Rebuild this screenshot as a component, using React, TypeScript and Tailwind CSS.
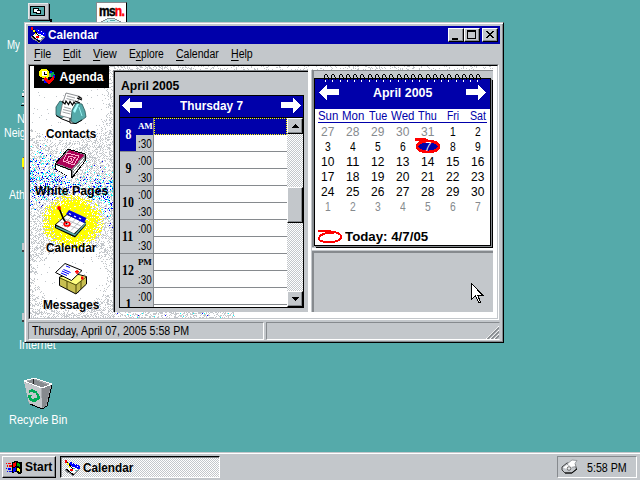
import React, { useLayoutEffect, useRef, useState } from "react";

const SANS = "font-['Liberation_Sans',Arial,sans-serif]";

/* Text squeezed or stretched to a fixed advance width, like a bitmap UI font. */
function T({ w, className = "", children }: { w: number; className?: string; children: React.ReactNode }) {
  const ref = useRef<HTMLSpanElement>(null);
  const [s, setS] = useState(1);
  useLayoutEffect(() => {
    const n = ref.current?.offsetWidth;
    if (n) setS(w / n);
  }, [w]);
  return (
    <span className={`block h-[14px] shrink-0 whitespace-nowrap text-[12px] leading-[14px] ${className}`} style={{ width: w }}>
      <span ref={ref} className="inline-block origin-left" style={{ transform: `scaleX(${s})` }}>
        {children}
      </span>
    </span>
  );
}

function rng(seed: number) {
  let a = seed;
  return () => {
    a = (a * 1664525 + 1013904223) >>> 0;
    return ((a >>> 8) & 0xffff) / 65536;
  };
}

/* Speckled wallpaper of the Agenda shell. */
function Speckle() {
  const r = rng(77);
  const p: Record<string, string> = { g: "", b: "", n: "", c: "", y: "" };
  const put = (k: string, x: number, y: number) => {
    p[k] += `M${x} ${y}h1v1h-1z`;
  };
  for (let y = 0; y < 252; y++) {
    for (let x = 0; x < 463; x++) {
      if (x > 84 && y > 4 && y < 246) continue;
      const v = r();
      const u = r();
      if (x > 84) {
        if (y < 5) {
          if (v < (x < 160 ? 0.35 : 0.16)) put("g", x, y);
        } else if (x < 205) {
          if (v < 0.34) put("g", x, y);
          else if (v < 0.37) put(u < 0.6 ? "c" : "b", x, y);
        }
        continue;
      }
      const yl = Math.hypot((x - 42) / 29, (y - 155) / 25);
      if (yl < 1.1 && v < (yl < 0.7 ? 0.93 : 0.93 - (yl - 0.7) * 1.9)) {
        put("y", x, y);
        continue;
      }
      const side = Math.abs(x - 41) / 41;
      const band = Math.exp(-Math.pow((y - (x < 42 ? 113 : 128)) / 20, 2)) * (x < 42 ? 0.3 : 0.24) * (0.5 + side / 2);
      if (v < band) {
        put(u < 0.42 ? "b" : u < 0.5 ? "n" : "c", x, y);
        continue;
      }
      const d1 = Math.hypot((x - 36) / 42, (y - 38) / 36);
      const d2 = Math.hypot((x - 42) / 38, (y - 211) / 32);
      let d = 0.42;
      if (d1 < 1) d = 0.02;
      else if (d1 < 1.2) d = 0.25;
      if (d2 < 0.9) d = 0.01;
      else if (d2 < 1.1) d = 0.2;
      if (y < 26 && x < 60) d = 0;
      if (r() < d && (x + y) % 2 === 0) put("g", x, y);
      else if (r() < d * 0.45) put("g", x, y);
    }
  }
  return (
    <svg className="absolute left-0 top-0" width="463" height="252" shapeRendering="crispEdges">
      <path d={p.g} fill="#c3c7cb" />
      <path d={p.b} fill="#0000ff" />
      <path d={p.n} fill="#0000aa" />
      <path d={p.c} fill="#00ffff" />
      <path d={p.y} fill="#ffff00" />
    </svg>
  );
}

function Arrow({ right = false }: { right?: boolean }) {
  return (
    <svg width="20" height="15" shapeRendering="crispEdges" className={right ? "-scale-x-100" : ""}>
      <path d="M0 7h1v1h-1zM1 6h1v3h-1zM2 5h1v5h-1zM3 4h1v7h-1zM4 3h1v9h-1zM5 2h1v11h-1zM6 1h1v13h-1zM7 0h1v15h-1zM8 4h12v6h-12z" fill="#fff" />
    </svg>
  );
}

function NotepadIcon() {
  return (
    <svg width="16" height="16" shapeRendering="crispEdges">
      <path d="M2 9L8 3l8 4-5 7z" fill="#fff" />
      <path d="M1 9l8 5 6-6v2l-6 6-8-5z" fill="#868a8e" />
      <path d="M5 3l2-1 9 4v3h-2L5 5z" fill="#0000ff" />
      <path d="M8 3h1v1h-1zM11 4h1v1h-1zM13 6h1v1h-1z" fill="#fff" />
      <path d="M1 0l8 9M2 9l8 6" stroke="#000" fill="none" />
      <path d="M1 0h2v3h-2zM6 9h3v2h-3z" fill="#ff0000" />
      <path d="M3 3h2v2h-2zM5 6h1v2h-1z" fill="#ffff00" />
      <path d="M9 8h2v1h-2zM11 10h2v1h-2zM7 11h1v1h-1z" fill="#55aaaa" />
    </svg>
  );
}

function AgendaIcon() {
  return (
    <svg width="17" height="16" shapeRendering="crispEdges">
      <path d="M2 0h6v1h1v1h1v6h-1v1h-6v-1h-2v-1h-1v-5h1v-1h1z" fill="#ffff00" />
      <path d="M3 2h5v5h-5z" fill="#fff" />
      <path d="M5 3h1v2h2v1h-3z" fill="#000" />
      <path d="M11 3h4l1 3v3h-3l-3-3z" fill="#00aa55" />
      <path d="M11 2h2v2h-2zM14 6h2v3h-2zM5 10h3v4h-3z" fill="#0000ff" />
      <path d="M6 8l4 3 5-4v3l-4 5h-2l-4-5z" fill="#ff0000" />
      <path d="M10 5h2v3h-2zM3 10h2v2h-2zM8 9h1v1h-1z" fill="#868a8e" />
    </svg>
  );
}

function ContactsIcon() {
  return (
    <svg width="32" height="32">
      <path d="M1 23V15l4-6 5 2v13l-4 2z" fill="#55aaaa" stroke="#2a5555" strokeWidth=".8" />
      <path d="M11 1l14 3.500-6 13-3 9-11-3 2-10z" fill="#fff" stroke="#6b6f73" strokeWidth=".8" />
      <path d="M12 4l8 2M11.500 6.500l8 2M8 17.500l8 2M7.500 20l8 2M9 15l7 2" stroke="#868a8e" strokeWidth=".8" fill="none" />
      <path d="M7 9.500l3 2.500 1-3 2.500 3.500 1.500-3 2.500 3.500 1.500-3 2.500 3" stroke="#000" strokeWidth="1.2" fill="none" />
      <path d="M22 6l5 2M23 4.500l4 2M20 9l5 2" stroke="#000" strokeWidth="1.2" fill="none" />
      <path d="M16 29l1-11 4-7 6 1 3 7 1 6-4 3-7 4z" fill="#55aaaa" stroke="#2a5555" strokeWidth=".8" />
      <path d="M18 19l4-7h2l-4 9z" fill="#aaffff" />
      <path d="M24 15l3 9" stroke="#aaffff" strokeWidth=".8" />
      <path d="M15 26v5l6 .5 6-3.500M1 23.500l6 3.500 8 3" stroke="#000" fill="none" />
    </svg>
  );
}

function BookIcon() {
  return (
    <svg width="32" height="32" shapeRendering="crispEdges">
      <path d="M0 15L13 0l17 5v7L17 29 0 20z" fill="#868a8e" stroke="#000" />
      <path d="M1 14L14 1l15 5-12 14z" fill="#aa0055" />
      <path d="M1 16l15 6v7L1 20z" fill="#fff" />
      <path d="M17 21L29 7v5L17 28z" fill="#868a8e" />
      <path d="M18 22L29 9M18 25L29 12" stroke="#fff" fill="none" />
      <path d="M0 15l16 6M16 21v8" stroke="#000" fill="none" />
      <path d="M12 4l12 3-5 9-11-4zM14 7l6 1.500-3 5-5-2zM15 9l2 1-1 2" stroke="#ffb0d0" fill="none" />
    </svg>
  );
}

function CalendarIcon() {
  return (
    <svg width="32" height="32">
      <path d="M0 18.500L12 8l19 8v3L20 31.500 0 22z" fill="#000" />
      <path d="M1 20l19 8 11-12v2L20 30 1 21.500z" fill="#55aaaa" />
      <path d="M1 18.500L12 9l18 8-11 10.500z" fill="#fff" />
      <path d="M5.500 16l18 7M9 12.500l17 7.500M7 20l9-9M12 22l9-9.500M16 24.500l9-9.500" stroke="#a8acb0" fill="none" strokeWidth=".8" />
      <path d="M11 8l3-4 17.500 8-2.500 5z" fill="#0000dd" />
      <path d="M14 7.500l2 1M19 10l2 1M24 12l2 1" stroke="#fff" fill="none" strokeWidth="1.2" />
      <path d="M4 2l4.500 11 3.500 5" stroke="#000" strokeWidth="1.6" fill="none" />
      <circle cx="4" cy="2" r="1.9" fill="#ff0000" />
      <ellipse cx="12" cy="18" rx="2.800" ry="2" stroke="#ff0000" strokeWidth="1.700" fill="none" />
    </svg>
  );
}

function MessagesIcon() {
  return (
    <svg width="33" height="32">
      <path d="M4.500 14l15-3.500 12 3v7.500L21 31 4.500 22.500z" fill="#c8bf50" stroke="#000" />
      <path d="M5 14.500l14-3.500 12 3-10 8z" fill="#ffff80" />
      <path d="M12 18v8M21 22v8.500M26 18v8M5 15l16 7 10-8" stroke="#403c00" fill="none" strokeWidth=".9" />
      <path d="M.5 9.500L10 .5l17 7-10.500 10z" fill="#fff" stroke="#000" />
      <path d="M7 8l7 3M8.500 6.500l7 3M6 10l6 2.500M11 3l4 1.500" stroke="#0000ff" fill="none" />
      <path d="M20 8h4v1.500h-4zM21.300 7h1.500v4h-1.500zM26 13.500h2.500v3h-2.500z" fill="#ff0000" />
    </svg>
  );
}

function Mark({ today = false }: { today?: boolean }) {
  return today ? (
    <svg width="26" height="16" className="block">
      <ellipse cx="13" cy="8.500" rx="11" ry="5.500" fill="#0000aa" stroke="#ff0000" strokeWidth="2.800" shapeRendering="crispEdges" />
      <path d="M0 1.500h11l3 2" stroke="#ff0000" strokeWidth="2.200" fill="none" shapeRendering="crispEdges" />
    </svg>
  ) : (
    <svg width="26" height="15" className="block">
      <path d="M0 2h12l4 2c-6-1-14 1-15 5s8 4.500 13 4 9-2 9-5-4-5-10-5" fill="none" stroke="#ff0000" strokeWidth="2" shapeRendering="crispEdges" />
    </svg>
  );
}

const RAISED = "bg-[#c3c7cb] border border-t-white border-l-white border-r-black border-b-black shadow-[inset_-1px_-1px_0_#868a8e]";
const DITHER = "bg-[conic-gradient(#fff_25%,#c3c7cb_0_50%,#fff_0_75%,#c3c7cb_0)] bg-[length:2px_2px]";

function CaptionButton({ d }: { d: string }) {
  return (
    <div className={`h-[14px] w-[16px] ${RAISED}`}>
      <svg width="14" height="12" className="block" shapeRendering="crispEdges">
        <path d={d} fill="#000" />
      </svg>
    </div>
  );
}

function ScrollButton({ down = false }: { down?: boolean }) {
  return (
    <div className={`flex h-[16px] w-[16px] shrink-0 items-center justify-center ${RAISED}`}>
      <svg width="7" height="4" shapeRendering="crispEdges">
        <path d={down ? "M0 0h7v1h-7zM1 1h5v1h-5zM2 2h3v1h-3zM3 3h1v1h-1z" : "M3 0h1v1h-1zM2 1h3v1h-3zM1 2h5v1h-5zM0 3h7v1h-7z"} />
      </svg>
    </div>
  );
}

const SIDE = [
  { label: "Contacts", w: 50, icon: <ContactsIcon /> },
  { label: "White Pages", w: 73, icon: <BookIcon /> },
  { label: "Calendar", w: 50, icon: <CalendarIcon /> },
  { label: "Messages", w: 56, icon: <MessagesIcon /> },
];

const MENU: [string, string, string, number][] = [
  ["", "F", "ile", 17],
  ["", "E", "dit", 18],
  ["", "V", "iew", 24],
  ["E", "x", "plore", 35],
  ["", "C", "alendar", 43],
  ["", "H", "elp", 22],
];

const HOURS: [string, string][] = [["8", "AM"], ["9", ":00"], ["10", ":00"], ["11", ":00"], ["12", "PM"], ["1", ":00"]];

function DayPanel() {
  return (
    <div className="flex h-[242px] w-[195px] shrink-0 flex-col border-l border-t border-[#868a8e] bg-[#c3c7cb] shadow-[inset_1px_1px_0_#000]">
      <T w={58} className="ml-[7px] mt-[8px] font-bold">April 2005</T>
      <div className="ml-[5px] mt-[2px] flex h-[213px] w-[185px] flex-col border border-black bg-black">
        <div className="flex h-[22px] shrink-0 items-center justify-between border-b border-black bg-[#0000aa] pb-[3px] pl-[2px] pr-[2px]">
          <Arrow />
          <T w={63} className="relative top-px font-bold text-white">Thursday 7</T>
          <Arrow right />
        </div>
        <div className="flex h-[189px] overflow-hidden">
          <div className="w-[167px] shrink-0 overflow-hidden bg-white">
            {HOURS.map(([h, m], i) => (
              <div key={h} className="flex h-[34px]">
                <div className="flex w-[34px] shrink-0 border-b border-r border-[#868a8e]">
                  <div className={`flex h-full w-[16px] justify-center font-['Liberation_Serif',serif] text-[14px] font-bold leading-[14px] ${i ? "bg-[#c3c7cb] text-black" : "bg-[#0000aa] text-white"}`}>
                    <span className="mt-[10px] scale-x-[0.85]">{h}</span>
                  </div>
                  <div className="flex h-full w-[17px] flex-col bg-[#c3c7cb]">
                    {m[0] === ":" ? (
                      <div className="h-[17px] pl-[2px] pt-[2px]"><T w={14}>{m}</T></div>
                    ) : (
                      <div className={`h-[17px] pl-[2px] pt-[3px] font-['Liberation_Serif',serif] text-[9px] font-bold leading-[10px] ${i ? "text-black" : "bg-[#0000aa] text-white"}`}>
                        <span className="tracking-[-0.3px]">{m}</span>
                      </div>
                    )}
                    {i < 5 && <div className="h-[16px] pl-[2px] pt-[2px]"><T w={14}>:30</T></div>}
                  </div>
                </div>
                <div className="flex-1">
                  <div className={`h-[17px] ${i ? "border-b border-[#868a8e]" : "border border-dotted border-[#ffff00] bg-[#0000aa]"}`} />
                  <div className="h-[17px] border-b border-[#868a8e]" />
                </div>
              </div>
            ))}
          </div>
          <div className={`flex w-[16px] flex-col ${DITHER}`}>
            <ScrollButton />
            <div className={`mt-[53px] h-[36px] w-[16px] ${RAISED}`} />
            <div className="flex-1" />
            <ScrollButton down />
          </div>
        </div>
      </div>
    </div>
  );
}

const WEEK: [string, number][] = [["Sun", 20], ["Mon", 22], ["Tue", 18], ["Wed", 23], ["Thu", 19], ["Fri", 12], ["Sat", 16]];
const DAYS = Array.from({ length: 42 }, (_, i) => (i < 5 ? 27 + i : i < 35 ? i - 4 : i - 34));

function Spiral() {
  return (
    <svg width="180" height="11" className="absolute left-0 top-[1px]" shapeRendering="crispEdges">
      {Array.from({ length: 22 }, (_, i) => {
        const x = 11 + Math.round(i * 7.25);
        return (
          <g key={i}>
            <path d={`M${x} 2h2v1h-2zM${x - 1} 3h1v5h-1zM${x + 2} 3h1v2h-1zM${x + 3} 5h1v3h-1z`} fill="#000" />
            <path d={`M${x} 8h1v2h-1z`} fill="#fff" />
          </g>
        );
      })}
    </svg>
  );
}

function MonthPanel() {
  return (
    <div className="flex h-[242px] w-[181px] shrink-0 flex-col border-t border-[#868a8e] bg-[#c3c7cb]">
      <div className="relative h-[176px] border-l-2 border-[#868a8e] pt-[7px]">
        <div className="flex h-[168px] w-[177px] flex-col border border-b-1 border-black bg-white shadow-[1px_1px_0_#868a8e,2px_2px_0_#000]">
          <div className="flex h-[30px] shrink-0 items-center justify-between bg-[#0000aa] pb-[4px] pl-[4px] pr-[4px]">
            <Arrow />
            <T w={59} className="relative top-px font-bold text-white">April 2005</T>
            <Arrow right />
          </div>
          <div className="mx-[3px] flex h-[14px] border-b border-[#0000aa] pt-0">
            {WEEK.map(([d, w]) => (
              <div key={d} className="-mx-px flex w-[27px] shrink-0 justify-center text-[#0000aa] first:-ml-[4px]">
                <T w={w}>{d}</T>
              </div>
            ))}
          </div>
          <div className="grid w-[175px] grid-cols-7 pt-[2px]">
            {DAYS.map((d, i) => (
              <div key={i} className={`relative flex h-[15px] w-[25px] justify-center ${i < 5 || i > 34 ? "text-[#868a8e]" : "text-black"}`}>
                {i === 11 && <div className="absolute left-0 top-[-2px]"><Mark today /></div>}
                <T w={d > 9 ? 13 : 6} className={`relative ${i === 11 ? "italic text-white" : ""}`}>{d}</T>
              </div>
            ))}
          </div>
          <div className="mt-[14px] flex items-center pl-[3px]">
            <Mark />
            <T w={83} className="ml-[1px] font-bold">Today: 4/7/05</T>
          </div>
        </div>
        <Spiral />
      </div>
      <div className="mt-[1px] h-[2px] shrink-0 bg-white" />
      <div className="h-px shrink-0" />
      <div className="flex-1 border-l-2 border-t-2 border-[#868a8e]" />
    </div>
  );
}

function CalendarWindow() {
  return (
    <div className="absolute left-[24px] top-[22px] flex h-[321px] w-[480px] flex-col border border-b-black border-l-[#c3c7cb] border-r-black border-t-[#c3c7cb] bg-[#c3c7cb] px-[3px] pt-[3px] shadow-[inset_1px_1px_0_#fff,inset_-1px_-1px_0_#868a8e]">
      <div className="flex h-[18px] shrink-0 items-center bg-[#0000aa] pl-[2px] pr-[2px]">
        <NotepadIcon />
        <T w={50} className="ml-[2px] font-bold text-white">Calendar</T>
        <div className="ml-auto flex">
          <CaptionButton d="M3 9h6v2h-6z" />
          <CaptionButton d="M2 1h9v9h-9zM3 3v6h7v-6z" />
          <div className="w-[2px]" />
          <CaptionButton d="M3 2h2v1h1v1h2v-1h1v-1h2v1h-1v1h-1v1h-1v1h1v1h1v1h1v1h-2v-1h-1v-1h-2v1h-1v1h-2v-1h1v-1h1v-1h1v-1h-1v-1h-1v-1h-1z" />
        </div>
      </div>
      <div className="flex h-[20px] shrink-0 gap-[12px] pl-[6px] pt-[3px]">
        {MENU.map(([a, b, c, w]) => (
          <T key={b + c} w={w}>{a}<span className="underline underline-offset-2">{b}</span>{c}</T>
        ))}
      </div>
      <div className="mr-px flex h-[256px] shrink-0 border border-b-white border-l-[#868a8e] border-r-white border-t-[#868a8e]">
        <div className="relative flex h-[254px] flex-1 overflow-hidden border border-b-[#c3c7cb] border-l-black border-r-[#c3c7cb] border-t-black bg-white">
          <Speckle />
          <div className="relative flex w-[83px] shrink-0 flex-col items-center pr-px">
            <div className="flex h-[22px] w-[75px] shrink-0 items-center bg-black pl-[5px]">
              <AgendaIcon />
              <T w={44} className="ml-[4px] font-bold text-white">Agenda</T>
            </div>
            <div className="mt-[4px] flex flex-col">
              {SIDE.map((s) => (
                <div key={s.label} className="flex h-[57px] flex-col items-center gap-[3px]">
                  {s.icon}
                  <T w={s.w} className="font-bold">{s.label}</T>
                </div>
              ))}
            </div>
          </div>
          <div className="relative mt-[4px] flex h-[242px]">
            <DayPanel />
            <div className="w-[3px] bg-white" />
            <div className="w-[1px] bg-[#c3c7cb]" />
            <MonthPanel />
          </div>
        </div>
      </div>
      <div className="mt-[2px] flex h-[18px] shrink-0 gap-[2px]">
        <div className="flex w-[236px] items-center border border-b-white border-l-[#868a8e] border-r-white border-t-[#868a8e] pl-[3px]">
          <T w={157}>Thursday, April 07, 2005 5:58 PM</T>
        </div>
        <div className="flex flex-1 items-end justify-end border border-b-white border-l-[#868a8e] border-r-transparent border-t-[#868a8e]">
          <svg width="13" height="13">
            <path d="M0 13L13 0M4 13L13 4M8 13L13 8" stroke="#fff" />
            <path d="M1.5 13L13 1.5M5.5 13L13 5.5M9.5 13L13 9.5" stroke="#868a8e" strokeWidth="1.6" />
          </svg>
        </div>
      </div>
    </div>
  );
}

function Taskbar() {
  return (
    <div className="absolute bottom-0 left-0 flex h-[28px] w-full items-start border-t border-[#c3c7cb] bg-[#c3c7cb] px-[2px] pt-[3px] shadow-[inset_0_1px_0_#fff]">
      <div className={`flex h-[22px] w-[54px] items-center pl-[3px] ${RAISED}`}>
        <svg width="17" height="15" shapeRendering="crispEdges">
          <path d="M6 2l4-1 3 1 3 0v11l-3 1-3-2-4 1z" fill="#000" />
          <path d="M7 3l3-1v4l-3 1z" fill="#ff0000" />
          <path d="M11 3l3 1v3l-3-1z" fill="#00aa00" />
          <path d="M7 8l3-1v4l-3 1z" fill="#0000ff" />
          <path d="M11 8l3 1v3l-3-1z" fill="#ffff00" />
          <path d="M0 3h1v1h-1zM2 3h3v1h-3zM1 5h1v2h-1zM3 5h3v2h-3z" fill="#ff0000" />
          <path d="M0 8h1v1h-1zM2 8h3v2h-3zM1 11h1v1h-1zM3 11h3v1h-3z" fill="#0000ff" />
        </svg>
        <T w={27} className="ml-[2px] font-bold">Start</T>
      </div>
      <div className={`ml-[4px] flex h-[22px] w-[160px] items-center border border-b-white border-l-black border-r-white border-t-black pl-[3px] pt-[1px] shadow-[inset_1px_1px_0_#868a8e] ${DITHER}`}>
        <NotepadIcon />
        <T w={50} className="ml-[3px] font-bold">Calendar</T>
      </div>
      <div className="ml-auto mr-[1px] flex h-[22px] w-[80px] items-center border border-b-white border-l-[#868a8e] border-r-white border-t-[#868a8e] pl-[3px]">
        <svg width="17" height="16">
          <path d="M1 8l5-4 8 1 1.500 5-5 4H4l-3-3z" fill="#c3c7cb" stroke="#303030" strokeWidth=".9" />
          <path d="M6 5l5-4 5 .5-2 3 1 3-5 1z" fill="#fff" stroke="#868a8e" strokeWidth=".8" />
          <path d="M2 8.500l4-2.500 5 2-3 3z" fill="#fff" />
          <circle cx="8" cy="9.500" r="1.800" fill="#e8eaec" stroke="#505050" strokeWidth=".8" />
          <path d="M4 14h7l5-4" stroke="#000" fill="none" />
        </svg>
        <T w={40} className="ml-[9px] mt-px">5:58 PM</T>
      </div>
    </div>
  );
}

function Desktop() {
  return (
    <div className="text-white">
      <svg className="absolute left-[24px] top-0" width="32" height="30" shapeRendering="crispEdges">
        <path d="M4 3h21v17h-21z" fill="#868a8e" />
        <path d="M4 3h20v16h-20z" fill="#e8eaec" />
        <path d="M5 4h19v15h-19z" fill="#c3c7cb" />
        <path d="M6 6h15v10h-15z" fill="#000" />
        <path d="M7 7h13v8h-13z" fill="#55aaaa" />
        <path d="M9 8h6v5h-6zM12 10h5v4h-5z" fill="#000" />
        <path d="M10 9h4v1h-1v2h-3zM13 11h3v2h-3z" fill="#fff" />
        <path d="M25 4h1v17h-20v-1h19zM26 19h2v3h-2z" fill="#000" />
      </svg>
      <div className="absolute left-[96px] top-[2px] flex h-[30px] w-[31px] flex-col items-center border border-b-0 border-l-[#868a8e] border-r-black border-t-[#868a8e] bg-white">
        <div className="h-[14px] origin-center scale-x-[0.8] font-['Liberation_Sans',Arial,sans-serif] text-[15px] font-bold leading-[15px] tracking-[-1px] text-black [-webkit-text-stroke:0.5px]">ms<span className="text-[#ff0000]">n.</span></div>
        <svg width="25" height="14" shapeRendering="crispEdges" className="mt-px">
          <ellipse cx="12" cy="8" rx="11" ry="7.5" fill="#c8f0f0" stroke="#868a8e" />
          <path d="M5 4h4M11 2h5M8 3v2M15 5h4" stroke="#55aaaa" />
        </svg>
      </div>
      <svg className="absolute left-[20px] top-[85px]" width="8" height="245" shapeRendering="crispEdges">
        <path d="M3 5h1v1h-1zM2 8h2v3h-2zM2 18h2v1h-2z" fill="#e8eaec" />
        <path d="M2 11h2v1h-2zM1 20h3v1h-3z" fill="#000" />
        <path d="M2 73h2v9h-2z" fill="#ffff00" />
        <path d="M3 72h1v1h-1zM3 82h1v2h-1z" fill="#aa5500" />
        <path d="M2 158h2v8h-2zM2 228h2v8h-2z" fill="#c3c7cb" />
        <path d="M2 165h2v2h-2zM2 235h2v2h-2z" fill="#404040" />
      </svg>
      <div className="absolute left-[7px] top-[38px]"><T w={13}>My</T></div>
      <div className="absolute left-[17px] top-[112px]"><T w={14}>Ne</T></div>
      <div className="absolute left-[4px] top-[126px]"><T w={22}>Neig</T></div>
      <div className="absolute left-[9px] top-[188px]"><T w={16}>Ath</T></div>
      <div className="absolute left-[19px] top-[338px]"><T w={37}>Internet</T></div>
      <svg className="absolute left-[22px] top-[377px]" width="32" height="34" shapeRendering="crispEdges">
        <path d="M2 4L12 1l18 6-5 22-5 3-13-5z" fill="#a4a8ac" />
        <path d="M2 5l17 6 1 20-13-5z" fill="#c3c7cb" />
        <path d="M20 11l9-4-5 22-4 2z" fill="#868a8e" />
        <path d="M5 5l6-3 15 6-6 3z" fill="#868a8e" />
        <path d="M11 2h1v6h-1z" fill="#222" />
        <path d="M2 4l10-3 18 6-10 4z" stroke="#fff" fill="none" />
        <path d="M30 8l-5 21-5 3-12-5" stroke="#000" fill="none" />
        <path d="M7 15l3-2 3 2M15 16l2 5-3 2M12 24l-4-2-1-4" stroke="#00aa55" strokeWidth="2.4" fill="none" />
        <path d="M11 14h4v2h-4zM12 21h2v4h-2zM6 18h4v1h-4z" fill="#00aa55" />
      </svg>
      <div className="absolute left-[9px] top-[413px]"><T w={58}>Recycle Bin</T></div>
    </div>
  );
}

export default function App() {
  return (
    <div className={`relative h-[480px] w-[640px] overflow-hidden bg-[#55aaaa] text-black ${SANS}`}>
      <Desktop />
      <CalendarWindow />
      <Taskbar />
      <svg className="absolute left-[471px] top-[283px]" width="13" height="20" shapeRendering="crispEdges">
        <path d="M.5.5v16l4-4 3 6.500h2l-3-7h5z" fill="#fff" stroke="#000" />
      </svg>
    </div>
  );
}
